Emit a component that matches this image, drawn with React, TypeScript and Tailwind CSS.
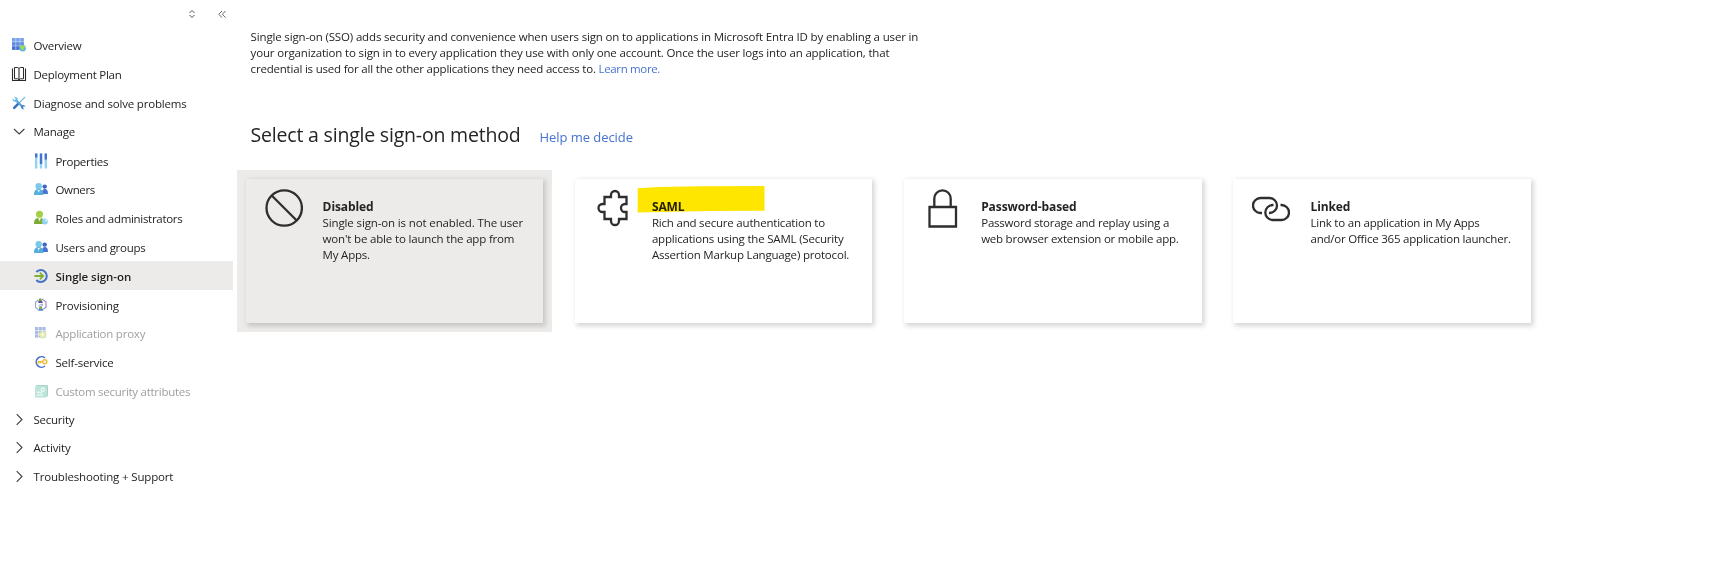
import type { ReactNode } from "react";

/* ---------- sidebar icons ---------- */

function Svg({ children, className = "" }: { children: ReactNode; className?: string }) {
  return (
    <svg viewBox="0 0 16 16" className={`size-4 shrink-0 ${className}`} fill="none">
      {children}
    </svg>
  );
}

const OverviewIcon = () => (
  <Svg>
    {[0, 1, 2].map((r) =>
      [0, 1, 2].map((c) => (
        <rect key={`${r}${c}`} x={1 + c * 4.1} y={1 + r * 4.1} width="3.7" height="3.7" fill={["#7aa3ea", "#5f8be0", "#4673d2"][r]} />
      ))
    )}
    <circle cx="11.7" cy="11.2" r="3.2" fill="#5cb8dc" />
    <path d="M9 9.600c1-1.300 3.200-1.900 4.600-.5 1 .9.4 1.700-.4 2.100-.9.500-.6 1.800-1.700 2-1.100-.3-1-1.500-1.700-2-.6-.4-1-.9-.8-1.600z" fill="#a5d84e" />
  </Svg>
);

const BookIcon = () => (
  <Svg>
    <path d="M3.500 1.500h3.200L8 2.500l1.300-1h3.200v11.300H9.300L8 13.800l-1.300-1H3.500z" stroke="#2b2b2b" strokeWidth="1" />
    <path d="M8 2.500v12M1.500 2.500v12h13v-12" stroke="#2b2b2b" strokeWidth="1.100" />
  </Svg>
);

const ToolsIcon = () => (
  <Svg>
    <path d="M13.600 2.300 8.500 7.600" stroke="#6fb2d8" strokeWidth="1.200" strokeLinecap="round" />
    <path d="M7.600 8.400 3.200 12.900" stroke="#3a6fc0" strokeWidth="2.500" strokeLinecap="round" />
    <path d="M4.500 4.700l7.700 7.800" stroke="#51a5d6" strokeWidth="2" />
    <path d="M3 1.700 4.700 3.500 4.500 4.800 3.300 5 1.600 3.300c-.2 1.500.3 3.300 2.300 3.500 2 .2 3.100-1 2.900-2.700C6.600 2.300 4.800 1.400 3 1.700z" fill="#66bfe6" />
    <path d="M13.300 14.300l-1.500-1.600.2-1.200 1.200-.2 1.300 1.300c0-1.500-.8-2.700-2.300-2.700-1.600 0-2.500 1-2.300 2.400.2 1.400 1.800 2.300 3.400 2z" fill="#4286c8" />
  </Svg>
);

const PropertiesIcon = () => (
  <Svg>
    <rect x="2" y="0.500" width="2.400" height="15" rx=".5" fill="#8fd4f0" />
    <rect x="2" y="0.500" width="2.400" height="4" fill="#4672d0" />
    <rect x="6.800" y="0.500" width="2.400" height="15" rx=".5" fill="#8fd4f0" />
    <rect x="6.800" y="0.500" width="2.400" height="10.500" fill="#4672d0" />
    <rect x="11.600" y="0.500" width="2.400" height="15" rx=".5" fill="#8fd4f0" />
    <rect x="11.600" y="0.500" width="2.400" height="6" fill="#4672d0" />
  </Svg>
);

const PeopleIcon = () => (
  <Svg>
    <circle cx="11.700" cy="5.600" r="2.200" fill="#3b66c8" />
    <path d="M9 13c-.2-3 .8-4.900 2.900-4.900 2 0 3.200 1.700 3 4.900z" fill="#4672d0" />
    <path d="M1 14c-.2-3.600 1.300-6 4.600-6s5 2.400 4.800 6z" fill="#56aeda" />
    <circle cx="5.700" cy="5.300" r="3.200" fill="#7cc9ec" />
    <path d="M4.500 9l1.200 2.800L6.900 9z" fill="#e8f6fc" />
  </Svg>
);

const RolesIcon = () => (
  <Svg>
    <path d="M1 14c-.2-4 1.500-6.300 5.300-6.300s5.500 2.300 5.300 6.300z" fill="#7dab35" />
    <circle cx="6.500" cy="4.300" r="3.500" fill="#a2d046" />
    <path d="M5 8l1.500 3.600L8 8z" fill="#f2f8e2" />
    <circle cx="11.800" cy="11.400" r="3" fill="#8fd2ee" />
    <path d="M11.800 11.400V8.400a3 3 0 0 1 3 3z" fill="#c6e9f6" />
  </Svg>
);

const SignOnIcon = () => (
  <Svg>
    <path d="M3.300 4A6 6 0 1 1 3.300 12" stroke="#4672c8" strokeWidth="2" />
    <path d="M1.400 8h8.300M6.900 4.700 10.200 8l-3.300 3.300" stroke="#7fb036" strokeWidth="1.800" />
  </Svg>
);

const ProvisioningIcon = () => (
  <Svg>
    <path d="M5.500 3 2.500 5.300v5L5.200 12.600" stroke="#8fa0d2" strokeWidth="1.100" />
    <path d="M9 1.900 13 5v5.300L10.300 12.400" stroke="#9a80c0" strokeWidth="1.100" />
    <path d="M5.200 6C5.200 3.700 6 3 7.300 3s2.300.7 2.300 3z" fill="#6c4f9c" />
    <circle cx="7.300" cy="2.800" r="1.500" fill="#76a83c" />
    <path d="M5.700 8.700 9.300 6.900v1.900L6 10.400" stroke="#7c8fca" strokeWidth=".8" />
    <path d="M5.300 13.800c0-2.200 1-3.100 2.400-3.100s2.500.9 2.500 3.100z" fill="#4d86cf" />
    <circle cx="7.700" cy="10.700" r="1.500" fill="#83b743" />
  </Svg>
);

const ProxyIcon = () => (
  <Svg className="opacity-45">
    {[0, 1, 2].map((r) =>
      [0, 1, 2].map((c) => (
        <rect key={`${r}${c}`} x={2 + c * 3.7} y={2 + r * 3.7} width="3.2" height="3.2" fill="#4468c4" />
      ))
    )}
    <path d="M9.600 5l4.600 4.600-4.600 4.600L5 9.600z" fill="#c3d44f" />
    <path d="M9.600 7.500v4M8 9.600h3.300" stroke="#fff" strokeWidth=".8" />
  </Svg>
);

const SelfServiceIcon = () => (
  <Svg>
    <path d="M12 4A5.300 5.300 0 1 0 12 12" stroke="#4672c8" strokeWidth="1.600" />
    <circle cx="11.800" cy="7.800" r="2" stroke="#efbd3c" strokeWidth="1.500" />
    <path d="M9.800 7.800H5.200v2M7.300 8v1.500" stroke="#efbd3c" strokeWidth="1.400" />
  </Svg>
);

const AttributesIcon = () => (
  <Svg className="opacity-45">
    <rect x="3" y="2" width="12" height="11.500" rx="1" fill="#3f9c88" />
    <rect x="2" y="3" width="12" height="11.500" rx="1" fill="#6cc4ae" />
    <circle cx="9.800" cy="6.700" r="1.700" stroke="#fff" strokeWidth="1" />
    <path d="M3.500 9.200h4M3.500 12h6.500M9 8.500l-1 2" stroke="#fff" strokeWidth="1" />
  </Svg>
);

const DownIcon = () => (
  <Svg>
    <path d="M3 6 8.200 11 13.400 6" stroke="#3f3f3f" strokeWidth="1.100" />
  </Svg>
);

const RightIcon = () => (
  <Svg>
    <path d="M5.700 3.200 11 8.500 5.700 13.800" stroke="#3f3f3f" strokeWidth="1.100" />
  </Svg>
);

/* ---------- sidebar ---------- */

type Item = {
  label: string;
  icon: ReactNode;
  height: string;
  tracking: string;
  nested?: boolean;
  selected?: boolean;
  disabled?: boolean;
};

const items: Item[] = [
  { label: "Overview", icon: <OverviewIcon />, height: "h-[29px]", tracking: "tracking-[-0.25px]" },
  { label: "Deployment Plan", icon: <BookIcon />, height: "h-[29px]", tracking: "tracking-[-0.26px]" },
  { label: "Diagnose and solve problems", icon: <ToolsIcon />, height: "h-[28px]", tracking: "tracking-[-0.18px]" },
  { label: "Manage", icon: <DownIcon />, height: "h-[30px]", tracking: "tracking-[-0.25px]" },
  { label: "Properties", icon: <PropertiesIcon />, height: "h-[28px]", tracking: "tracking-[-0.3px]", nested: true },
  { label: "Owners", icon: <PeopleIcon />, height: "h-[29px]", tracking: "tracking-[-0.35px]", nested: true },
  { label: "Roles and administrators", icon: <RolesIcon />, height: "h-[29px]", tracking: "tracking-[-0.3px]", nested: true },
  { label: "Users and groups", icon: <PeopleIcon />, height: "h-[29px]", tracking: "tracking-[-0.28px]", nested: true },
  { label: "Single sign-on", icon: <SignOnIcon />, height: "h-[29px]", tracking: "tracking-[-0.06px]", nested: true, selected: true },
  { label: "Provisioning", icon: <ProvisioningIcon />, height: "h-[28px]", tracking: "tracking-[-0.2px]", nested: true },
  { label: "Application proxy", icon: <ProxyIcon />, height: "h-[29px]", tracking: "tracking-[-0.22px]", nested: true, disabled: true },
  { label: "Self-service", icon: <SelfServiceIcon />, height: "h-[29px]", tracking: "tracking-[-0.2px]", nested: true },
  { label: "Custom security attributes", icon: <AttributesIcon />, height: "h-[28px]", tracking: "tracking-[-0.27px]", nested: true, disabled: true },
  { label: "Security", icon: <RightIcon />, height: "h-[28px]", tracking: "tracking-[-0.25px]" },
  { label: "Activity", icon: <RightIcon />, height: "h-[29px]", tracking: "tracking-[-0.15px]" },
  { label: "Troubleshooting + Support", icon: <RightIcon />, height: "h-[29px]", tracking: "tracking-[-0.16px]" },
];

function NavRow({ item }: { item: Item }) {
  return (
    <li className={`${item.height} ${item.selected ? "bg-[#ecebe9]" : ""}`}>
      <a className={`flex h-[29px] items-center gap-[6.5px] ${item.nested ? "pl-[33px]" : "pl-[11px]"}`}>
        {item.icon}
        <span
          className={`pt-[2px] leading-4 whitespace-nowrap ${item.tracking} ${item.selected ? "font-semibold" : ""} ${item.disabled ? "text-[#a19f9d]" : ""}`}
        >
          {item.label}
        </span>
      </a>
    </li>
  );
}

function Sidebar() {
  return (
    <nav className="w-[233px] shrink-0">
      <div className="flex h-[30px] items-start justify-end gap-[22px] pt-[9px] pr-[7.5px]">
        <svg viewBox="0 0 8 10" className="h-[10px] w-2" fill="none" stroke="#555" strokeWidth="1">
          <path d="M1.500 4 4 1.500 6.500 4M1.500 6 4 8.500 6.500 6" />
        </svg>
        <svg viewBox="0 0 8 10" className="h-[10px] w-2" fill="none" stroke="#666" strokeWidth="1">
          <path d="M4 2 .8 5.300 4 8.600M7.500 2 4.300 5.300 7.500 8.600" />
        </svg>
      </div>
      <ul>
        {items.map((i) => (
          <NavRow key={i.label} item={i} />
        ))}
      </ul>
    </nav>
  );
}

/* ---------- method cards ---------- */

function BigIcon({ children }: { children: ReactNode }) {
  return (
    <svg viewBox="0 0 38 40" className="mt-[10px] h-10 w-[38px] shrink-0" fill="none" stroke="#2f2e2d" strokeWidth="2.3">
      {children}
    </svg>
  );
}

type Line = { text: string; tracking: string };
type Method = { title: string; icon: ReactNode; lines: Line[]; selected?: boolean; marked?: boolean };

const methods: Method[] = [
  {
    title: "Disabled",
    selected: true,
    icon: (
      <BigIcon>
        <circle cx="19.200" cy="19" r="17.700" />
        <path d="M6.700 6.500 31.700 31.500" />
      </BigIcon>
    ),
    lines: [
      { text: "Single sign-on is not enabled. The user", tracking: "tracking-[-0.13px]" },
      { text: "won't be able to launch the app from", tracking: "tracking-[-0.17px]" },
      { text: "My Apps.", tracking: "tracking-[-0.2px]" },
    ],
  },
  {
    title: "SAML",
    marked: true,
    icon: (
      <BigIcon>
        <path d="M10.500 8H17V6a4 4 0 0 1 8 0v2h7.500v7H31a4 4 0 0 0 0 8h1.500v7H25v2a4 4 0 0 1-8 0v-2h-6.500v-7h-2a4 4 0 0 1 0-8h2z" />
      </BigIcon>
    ),
    lines: [
      { text: "Rich and secure authentication to", tracking: "tracking-[-0.2px]" },
      { text: "applications using the SAML (Security", tracking: "tracking-[-0.2px]" },
      { text: "Assertion Markup Language) protocol.", tracking: "tracking-[-0.19px]" },
    ],
  },
  {
    title: "Password-based",
    icon: (
      <BigIcon>
        <path d="M6.500 18H33v19.500H6.500zM11.300 18V9.500a8.200 8.200 0 0 1 16.400 0V18" />
      </BigIcon>
    ),
    lines: [
      { text: "Password storage and replay using a", tracking: "tracking-[-0.23px]" },
      { text: "web browser extension or mobile app.", tracking: "tracking-[-0.24px]" },
    ],
  },
  {
    title: "Linked",
    icon: (
      <BigIcon>
        <path d="M10 24H8.500a7.500 7.500 0 0 1 0-15h9a7.500 7.500 0 0 1 0 15H17M21.500 16h-.7a7.500 7.500 0 0 0 0 15h8.700a7.500 7.500 0 0 0 0-15h-1" />
      </BigIcon>
    ),
    lines: [
      { text: "Link to an application in My Apps", tracking: "tracking-[-0.22px]" },
      { text: "and/or Office 365 application launcher.", tracking: "tracking-[-0.22px]" },
    ],
  },
];

function MethodCard({ method }: { method: Method }) {
  return (
    <div className={`w-[315px] shrink-0 p-[9px] pl-[8.6px] ${method.selected ? "bg-[#ecebe9]" : ""}`}>
      <div className="relative flex h-36 gap-5 pl-[19px] shadow-[1.5px_2px_5px_1px_rgba(0,0,0,0.17)]">
        {method.icon}
        <div className="pt-5 leading-4 whitespace-nowrap">
          <h3 className="text-[12px] leading-4 font-bold tracking-[-0.1px]">{method.title}</h3>
          {method.lines.map((l) => (
            <p key={l.text} className={l.tracking}>
              {l.text}
            </p>
          ))}
        </div>
        {method.marked && (
          <svg viewBox="0 0 128 27" className="absolute top-[7px] left-[62px] h-[27px] w-32 mix-blend-multiply">
            <path d="M.7 2.200 22 1l40-.8 65.500-.2v24.700l-54 .4L.7 26.600z" fill="#ffe600" />
          </svg>
        )}
      </div>
    </div>
  );
}

export default function App() {
  return (
    <div className="flex h-[567px] overflow-hidden bg-white font-['Open_Sans','Noto_Sans',sans-serif] text-[11.5px] text-[#252423]">
      <Sidebar />
      <main className="flex-1 pl-1">
        <div className="pt-[29px] pl-[13.6px] leading-4 whitespace-nowrap">
          <p className="tracking-[-0.154px]">
            Single sign-on (SSO) adds security and convenience when users sign on to applications in Microsoft Entra ID by enabling a user in
          </p>
          <p className="tracking-[-0.16px]">
            your organization to sign in to every application they use with only one account. Once the user logs into an application, that
          </p>
          <p className="tracking-[-0.2px]">
            credential is used for all the other applications they need access to.{" "}
            <a className="tracking-[-0.35px] text-[#4672d0]">Learn more.</a>
          </p>
        </div>
        <div className="mt-[44px] flex h-7 items-baseline gap-[19px] pl-[13.6px] whitespace-nowrap">
          <h2 className="text-[19.5px] leading-7 tracking-[-0.2px]">Select a single sign-on method</h2>
          <a className="text-[13px] tracking-[-0.05px] text-[#4672d0]">Help me decide</a>
        </div>
        <div className="mt-[21px] flex gap-[14.3px]">
          {methods.map((m) => (
            <MethodCard key={m.title} method={m} />
          ))}
        </div>
      </main>
    </div>
  );
}
